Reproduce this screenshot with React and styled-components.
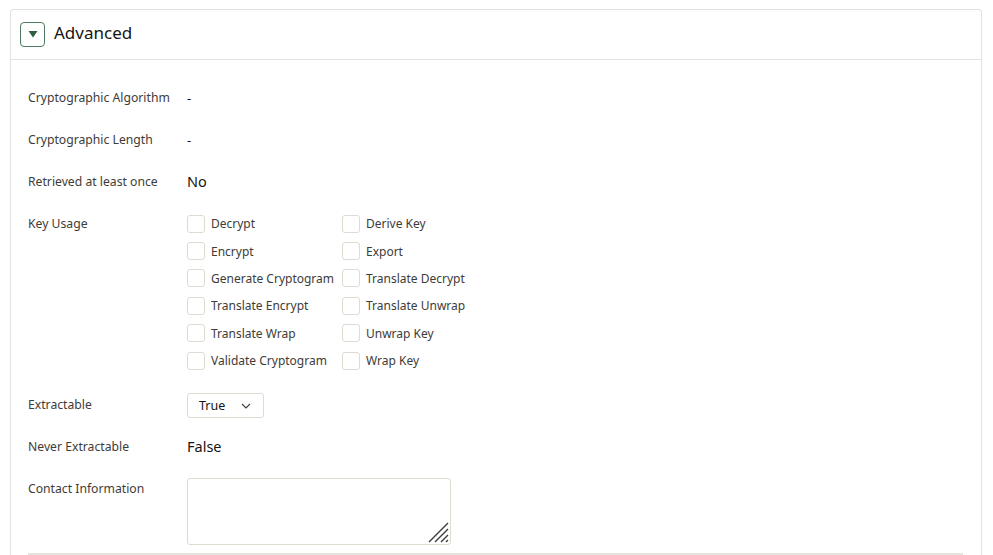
import React from 'react'
import styled, { createGlobalStyle } from 'styled-components'

const GlobalStyle = createGlobalStyle`
  html, body {
    margin: 0;
    background: #fff;
    font-family: "Noto Sans", "Open Sans", sans-serif;
    color: #161513;
  }
`

const Page = styled.div`
  padding: 9px 11px 0 10px;
  height: 555px;
  box-sizing: border-box;
  overflow: hidden;
`

const Card = styled.section`
  border: 1px solid #e4e2df;
  border-bottom: none;
  border-radius: 4px 4px 0 0;
  height: 100%;
  box-sizing: border-box;
`

const Header = styled.div`
  display: flex;
  align-items: center;
  gap: 9px;
  height: 50px;
  padding: 0 0 4px 9px;
  border-bottom: 1px solid #e4e2df;
  box-sizing: border-box;
`

const Toggle = styled.button`
  width: 25px;
  height: 25px;
  border: 1px solid #4f7b60;
  border-radius: 4px;
  background: #fff;
  display: flex;
  align-items: center;
  justify-content: center;
  padding: 0;
  margin-top: 3px;
`

const Title = styled.h2`
  margin: 0;
  font-size: 17px;
  font-weight: 400;
  color: #161513;
`

const Body = styled.div`
  padding: 24px 18px 0 17px;
`

const Row = styled.div`
  display: grid;
  grid-template-columns: 159px 1fr;
  align-items: start;
  min-height: ${p => p.$h || 42}px;
`

const Label = styled.div`
  font-size: 12.2px;
  line-height: 28px;
  color: #3e3c38;
`

const Value = styled.div`
  font-size: ${p => (p.$big ? '14.5px' : '13px')};
  line-height: ${p => (p.$big ? '26px' : '28px')};
  color: #161513;
`

const CheckGrid = styled.div`
  display: grid;
  grid-template-columns: 155px 160px;
  grid-auto-rows: 27.4px;
`

const CheckItem = styled.label`
  display: flex;
  align-items: center;
  gap: 6px;
  font-size: 12px;
  color: #3e3c38;
  white-space: nowrap;
`

const Box = styled.span`
  width: 16px;
  height: 16px;
  border: 1px solid #dedbd3;
  border-radius: 3px;
  flex: none;
`

const Select = styled.div`
  display: inline-flex;
  align-items: center;
  justify-content: space-between;
  width: 77px;
  height: 25px;
  box-sizing: border-box;
  padding: 0 12px 0 11px;
  border: 1px solid #dedbd3;
  border-radius: 3px;
  font-size: 12.5px;
  color: #161513;
  margin-top: 2px;
`

const TextArea = styled.div`
  position: relative;
  width: 264px;
  height: 67px;
  margin-top: 3px;
  box-sizing: border-box;
  border: 1px solid #dedbd3;
  border-radius: 3px;
`

const Grip = styled.svg`
  position: absolute;
  right: 1px;
  bottom: 1px;
`

const Divider = styled.div`
  margin-top: 8px;
  height: 2px;
  background: #e6e4e1;
`

const left = ['Decrypt', 'Encrypt', 'Generate Cryptogram', 'Translate Encrypt', 'Translate Wrap', 'Validate Cryptogram']
const right = ['Derive Key', 'Export', 'Translate Decrypt', 'Translate Unwrap', 'Unwrap Key', 'Wrap Key']

export default function App() {
  const items = []
  left.forEach((l, i) => {
    items.push(l, right[i])
  })
  return (
    <Page>
      <GlobalStyle />
      <Card>
        <Header>
          <Toggle aria-label="collapse">
            <svg width="10" height="8" viewBox="0 0 10 8">
              <path d="M0.5 1h9L5 7.5z" fill="#2f5d42" />
            </svg>
          </Toggle>
          <Title>Advanced</Title>
        </Header>
        <Body>
          <Row>
            <Label>Cryptographic Algorithm</Label>
            <Value>-</Value>
          </Row>
          <Row>
            <Label>Cryptographic Length</Label>
            <Value>-</Value>
          </Row>
          <Row>
            <Label>Retrieved at least once</Label>
            <Value $big>No</Value>
          </Row>
          <Row $h={181}>
            <Label>Key Usage</Label>
            <CheckGrid>
              {items.map(t => (
                <CheckItem key={t}>
                  <Box />
                  {t}
                </CheckItem>
              ))}
            </CheckGrid>
          </Row>
          <Row>
            <Label>Extractable</Label>
            <div>
              <Select>
                True
                <svg width="10" height="6" viewBox="0 0 10 6">
                  <path d="M1 1l4 4 4-4" stroke="#3e3c38" strokeWidth="1.1" fill="none" />
                </svg>
              </Select>
            </div>
          </Row>
          <Row>
            <Label>Never Extractable</Label>
            <Value $big>False</Value>
          </Row>
          <Row $h={40}>
            <Label>Contact Information</Label>
            <TextArea>
              <Grip width="22" height="22" viewBox="0 0 22 22">
                <path d="M2 21L21 2M8 21L21 8M14 21L21 14M19 21L21 19" stroke="#3e3c38" strokeWidth="1.4" />
              </Grip>
            </TextArea>
          </Row>
          <Divider />
        </Body>
      </Card>
    </Page>
  )
}
